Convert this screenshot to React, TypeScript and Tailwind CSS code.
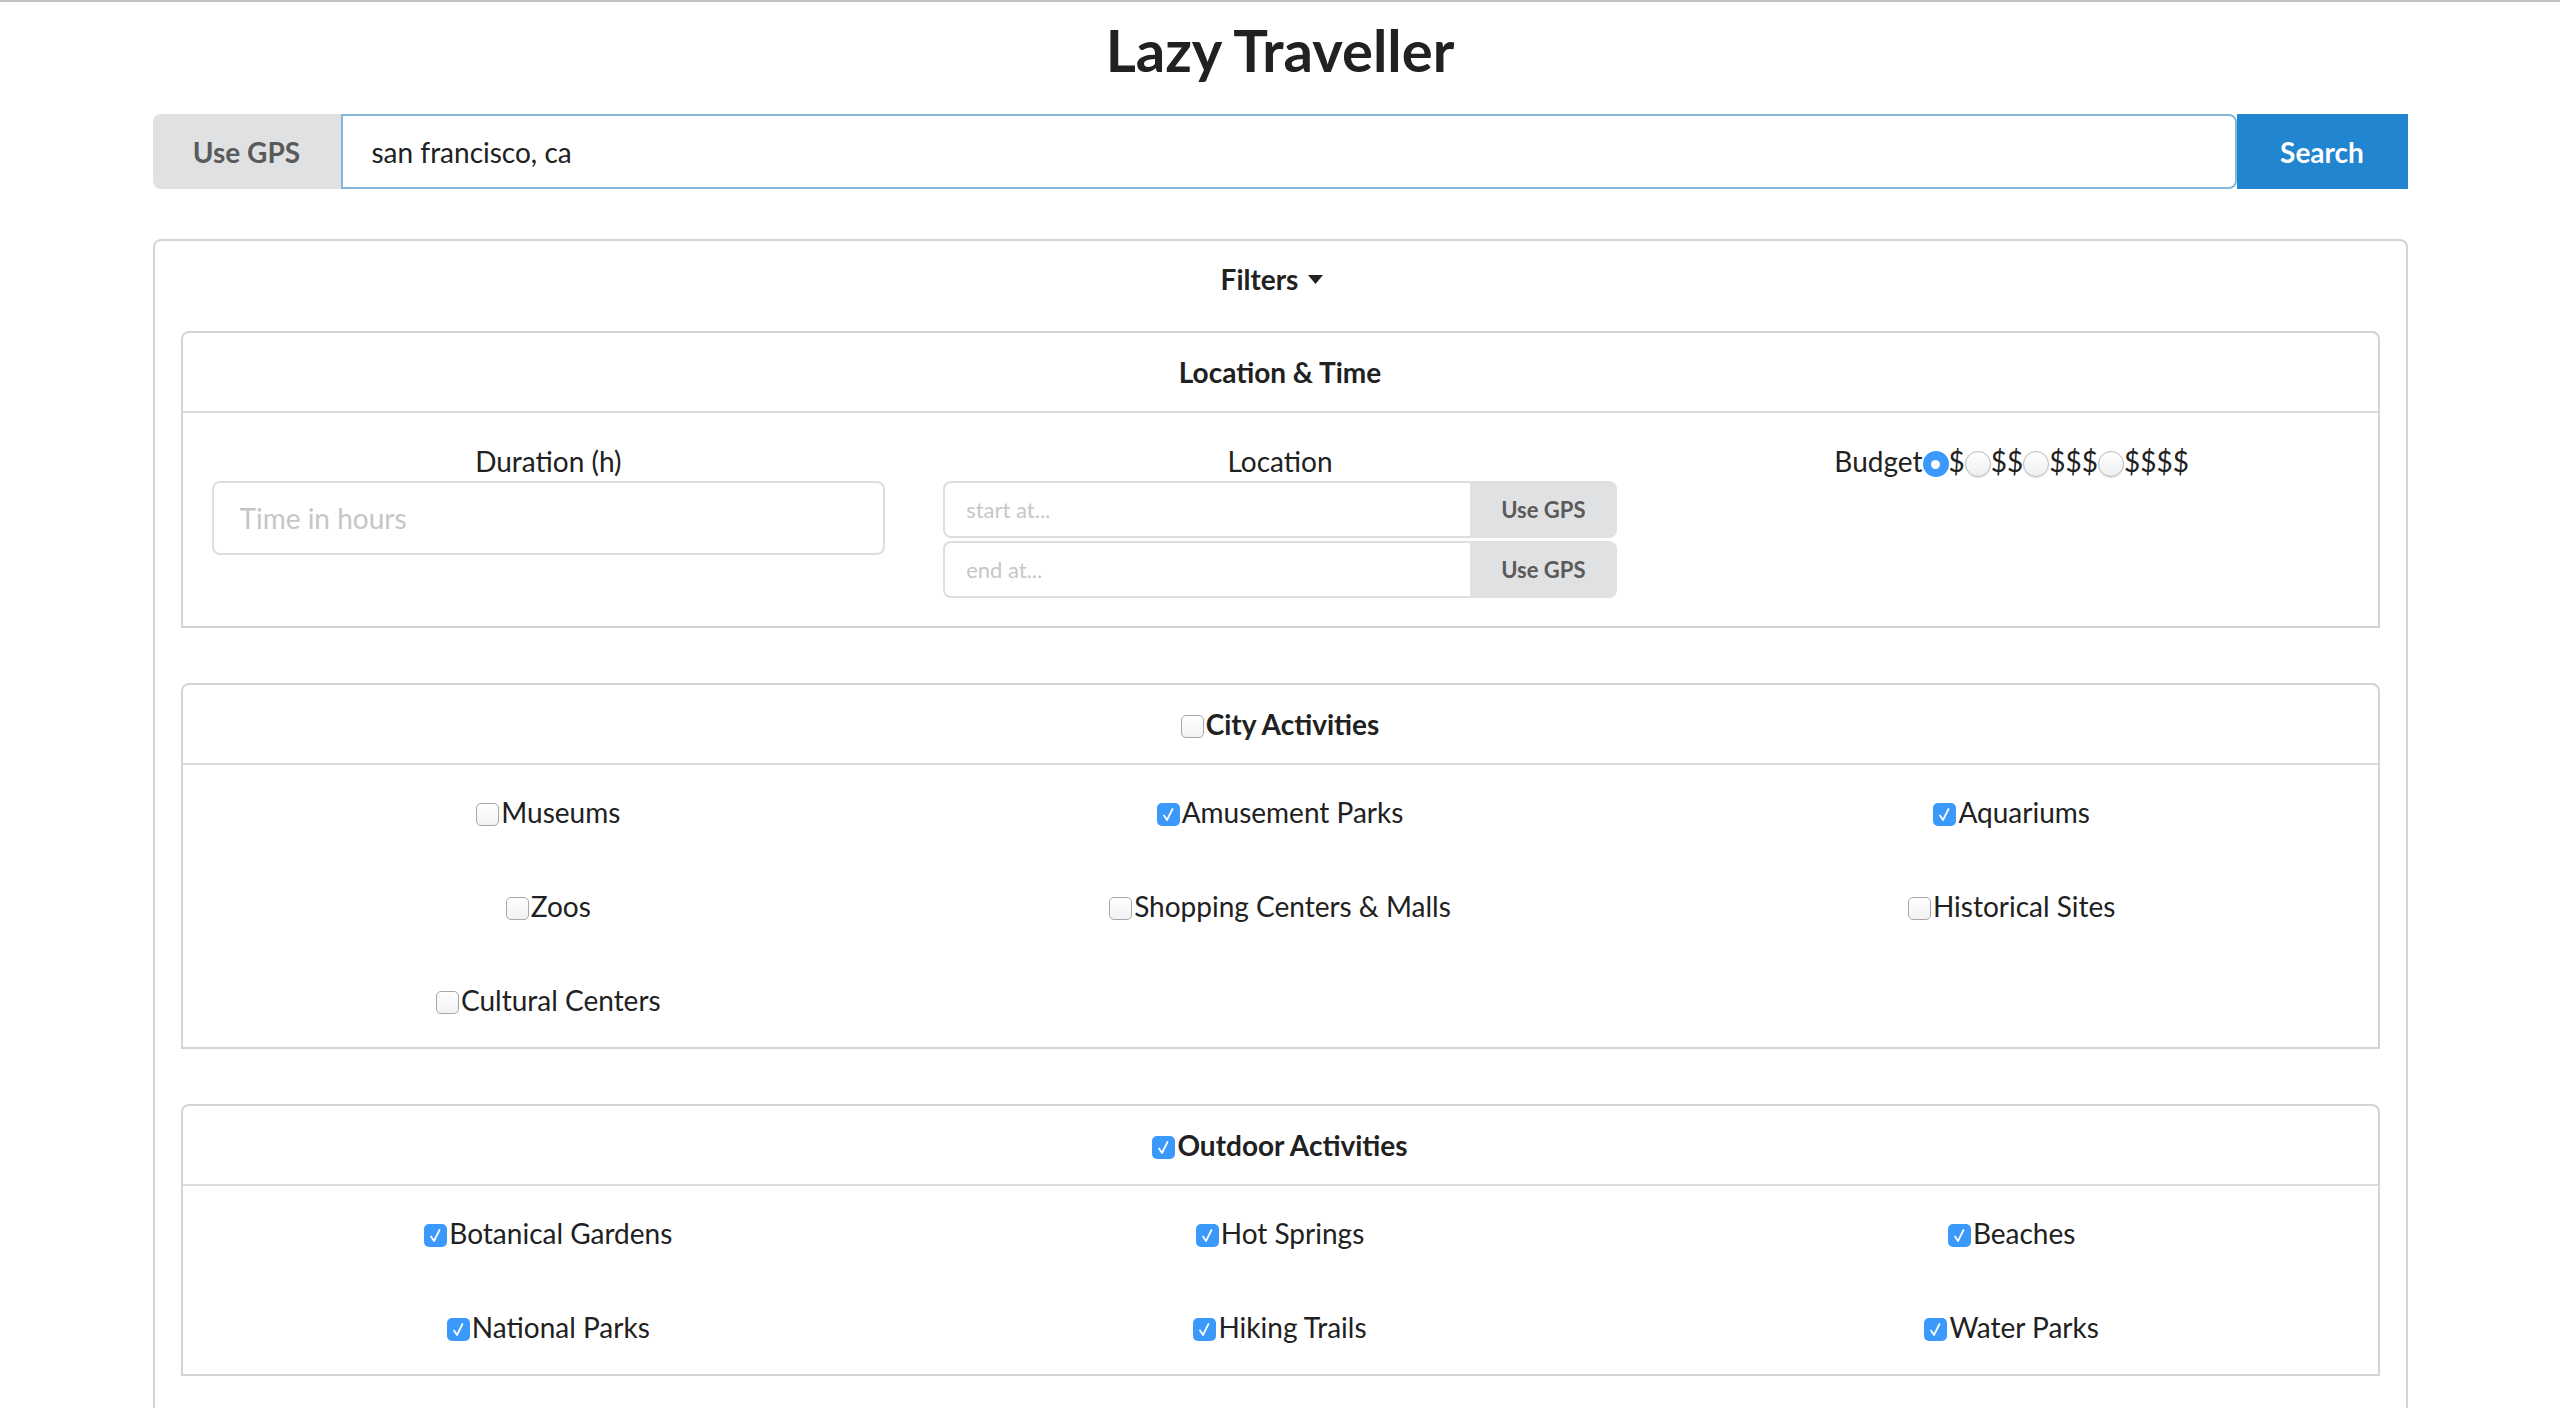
import { useState } from "react";

type Item = { label: string; checked: boolean };

const CITY: Item[] = [
  { label: "Museums", checked: false },
  { label: "Amusement Parks", checked: true },
  { label: "Aquariums", checked: true },
  { label: "Zoos", checked: false },
  { label: "Shopping Centers & Malls", checked: false },
  { label: "Historical Sites", checked: false },
  { label: "Cultural Centers", checked: false },
];

const OUTDOOR: Item[] = [
  { label: "Botanical Gardens", checked: true },
  { label: "Hot Springs", checked: true },
  { label: "Beaches", checked: true },
  { label: "National Parks", checked: true },
  { label: "Hiking Trails", checked: true },
  { label: "Water Parks", checked: true },
];

const BUDGETS = ["$", "$$", "$$$", "$$$$"];

function Checkbox({ checked, onClick }: { checked: boolean; onClick: () => void }) {
  if (checked) {
    return (
      <span
        onClick={onClick}
        className="inline-flex h-[23px] w-[23px] shrink-0 cursor-pointer items-center justify-center rounded-[5px] bg-[#3b99fc] translate-y-[2px]"
      >
        <svg width="23" height="23" viewBox="0 0 23 23" fill="none">
          <path d="M7 12.5 L10 17 L15.5 6" stroke="#fff" strokeWidth="1.7" strokeLinecap="round" strokeLinejoin="round" />
        </svg>
      </span>
    );
  }
  return (
    <span
      onClick={onClick}
      className="inline-block h-[23px] w-[23px] shrink-0 cursor-pointer rounded-[5px] border border-[#a8a8a8] bg-gradient-to-b from-white to-[#f2f2f2] translate-y-[2px]"
    />
  );
}

function Radio({ on, onClick }: { on: boolean; onClick: () => void }) {
  if (on) {
    return (
      <span
        onClick={onClick}
        className="inline-flex h-[26px] w-[26px] shrink-0 cursor-pointer items-center justify-center rounded-full bg-[#3b99fc] translate-y-[3px]"
      >
        <span className="h-[9px] w-[9px] rounded-full bg-white" />
      </span>
    );
  }
  return (
    <span
      onClick={onClick}
      className="inline-block h-[26px] w-[26px] shrink-0 cursor-pointer rounded-full border border-[#b9b9b9] bg-gradient-to-b from-white to-[#efefef] shadow-[0_1px_1px_rgba(0,0,0,0.12)] translate-y-[3px]"
    />
  );
}

function ActivityCard({ title, initial }: { title: string; initial: Item[] }) {
  const [items, setItems] = useState(initial);
  const all = items.every((i) => i.checked);

  function toggle(idx: number) {
    setItems((prev) => prev.map((it, i) => (i === idx ? { ...it, checked: !it.checked } : it)));
  }

  return (
    <div className="rounded-t-[8px] border-2 border-[#d4d4d5]">
      <div className="flex items-center justify-center gap-[2px] border-b-2 border-[#dcdcdd] py-[19px] text-[28px] font-bold leading-[40px]">
        <Checkbox checked={all} onClick={() => setItems((prev) => prev.map((it) => ({ ...it, checked: !all })))} />
        <span>{title}</span>
      </div>
      <div className="grid grid-cols-3">
        {items.map((it, i) => (
          <div key={it.label} className="flex items-center justify-center gap-[2px] py-[27px] text-[28px] leading-[40px]">
            <Checkbox checked={it.checked} onClick={() => toggle(i)} />
            <span>{it.label}</span>
          </div>
        ))}
      </div>
    </div>
  );
}

export default function App() {
  const [budget, setBudget] = useState(0);

  return (
    <div className="h-screen overflow-hidden border-t-2 border-[#c2c2c2] bg-white font-[Lato,sans-serif] text-[#212121]">
      <div className="mx-auto w-[2255px]">
        <h1 className="mt-[12px] text-center text-[58px] font-bold leading-[72px]">Lazy Traveller</h1>

        {/* Search bar */}
        <div className="mt-[28px] flex h-[75px]">
          <button className="w-[188px] shrink-0 rounded-l-[8px] bg-[#e0e1e2] text-[28px] font-bold text-[#5a5a5a]">
            Use GPS
          </button>
          <input
            defaultValue="san francisco, ca"
            className="min-w-0 flex-1 rounded-r-[8px] border-2 border-[#85b7d9] px-[29px] text-[28px] text-[#212121] outline-none"
          />
          <button className="w-[171px] shrink-0 bg-[#2185d0] text-[28px] font-bold text-white">Search</button>
        </div>

        {/* Filters */}
        <div className="mt-[50px] rounded-[8px] border-2 border-[#d4d4d5] px-[26px] pb-[60px] pt-[18px]">
          <div className="flex h-[40px] items-center justify-center gap-[10px] pr-[16px] text-[28px] font-bold leading-[40px]">
            <span>Filters</span>
            <svg width="15" height="9" viewBox="0 0 15 9">
              <path d="M0 0 H15 L7.5 9 Z" fill="#212121" />
            </svg>
          </div>

          <div className="mt-[32px] flex flex-col gap-[55px]">
            {/* Location & Time */}
            <div className="rounded-t-[8px] border-2 border-[#d4d4d5]">
              <div className="border-b-2 border-[#dcdcdd] py-[19px] text-center text-[28px] font-bold leading-[40px]">
                Location &amp; Time
              </div>
              <div className="grid grid-cols-3 py-[28px]">
                <div className="flex flex-col items-center px-[29px]">
                  <div className="text-[28px] leading-[40px]">Duration (h)</div>
                  <input
                    placeholder="Time in hours"
                    className="h-[74px] w-full rounded-[8px] border-2 border-[#dedede] px-[26px] text-[28px] outline-none placeholder:text-[#c6c6c6]"
                  />
                </div>
                <div className="flex flex-col items-center px-[29px]">
                  <div className="text-[28px] leading-[40px]">Location</div>
                  <div className="flex w-full flex-col gap-[3px]">
                    {["start at...", "end at..."].map((p) => (
                      <div key={p} className="flex h-[57px]">
                        <input
                          placeholder={p}
                          className="min-w-0 flex-1 rounded-l-[8px] border-2 border-r-0 border-[#dedede] px-[21px] text-[22px] outline-none placeholder:text-[#c6c6c6]"
                        />
                        <button className="w-[147px] shrink-0 rounded-r-[8px] bg-[#e0e1e2] text-[22px] font-bold text-[#5a5a5a]">
                          Use GPS
                        </button>
                      </div>
                    ))}
                  </div>
                </div>
                <div className="flex items-start justify-center px-[29px]">
                  <div className="flex items-center text-[28px] leading-[40px]">
                    <span>Budget</span>
                    {BUDGETS.map((b, i) => (
                      <span key={b} className="flex items-center">
                        <Radio on={budget === i} onClick={() => setBudget(i)} />
                        <span>{b}</span>
                      </span>
                    ))}
                  </div>
                </div>
              </div>
            </div>

            <ActivityCard title="City Activities" initial={CITY} />
            <ActivityCard title="Outdoor Activities" initial={OUTDOOR} />
          </div>
        </div>
      </div>
    </div>
  );
}
